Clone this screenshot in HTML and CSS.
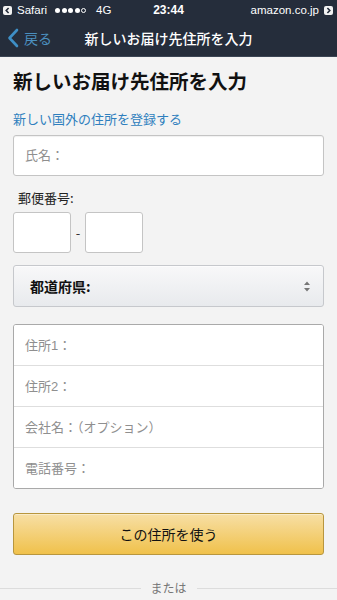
FILE: index.html
```html
<!DOCTYPE html>
<html lang="ja">

<head>
    <meta charset="UTF-8">
    <meta name="viewport" content="width=device-width, initial-scale=1.0">
    <title>新しいお届け先住所を入力</title>
    <link rel="stylesheet" href="styles.css">
</head>

<body>
    <header class="top">
        <div class="status">
            <div class="status-left">
                <span class="app-back">
                    <svg width="9" height="9" viewBox="0 0 9 9"><path d="M5.6 2 L3.2 4.5 L5.6 7" fill="none" stroke="#252d3b" stroke-width="1.6"/></svg>
                </span>
                <span>Safari</span>
                <span class="signal">
                    <i></i><i></i><i></i><i></i><i class="empty"></i>
                </span>
                <span class="net">4G</span>
            </div>
            <div class="clock">23:44</div>
            <div class="status-right">
                <span>amazon.co.jp</span>
                <span class="app-back">
                    <svg width="9" height="9" viewBox="0 0 9 9"><path d="M3.4 2 L5.8 4.5 L3.4 7" fill="none" stroke="#252d3b" stroke-width="1.6"/></svg>
                </span>
            </div>
        </div>
        <nav class="nav">
            <a class="back" href="#">
                <svg width="12" height="20" viewBox="0 0 12 20"><path d="M10 2 L2.5 10 L10 18" fill="none" stroke="#3e8fc6" stroke-width="2.6" stroke-linecap="round" stroke-linejoin="round"/></svg>
                <span>戻る</span>
            </a>
            <div class="nav-title">新しいお届け先住所を入力</div>
        </nav>
    </header>

    <main class="page">
        <h1>新しいお届け先住所を入力</h1>
        <a class="intl-link" href="#">新しい国外の住所を登録する</a>

        <input class="field" type="text" placeholder="氏名：">

        <label class="zip-label">郵便番号:</label>
        <div class="zip-row">
            <input class="zip-box" type="text">
            <span class="zip-dash">-</span>
            <input class="zip-box" type="text">
        </div>

        <div class="select">
            <span>都道府県:</span>
            <svg width="8" height="11" viewBox="0 0 8 11"><path d="M4 0.5 L7 4 L1 4 Z M4 10.5 L7 7 L1 7 Z" fill="#777"/></svg>
        </div>

        <div class="group">
            <input class="group-row" type="text" placeholder="住所1：">
            <input class="group-row" type="text" placeholder="住所2：">
            <input class="group-row" type="text" placeholder="会社名：（オプション）">
            <input class="group-row" type="text" placeholder="電話番号：">
        </div>

        <button class="submit">この住所を使う</button>

        <div class="divider"><span>または</span></div>
    </main>
</body>

</html>
```

FILE: styles.css
```css
/* General Styles */
body {
    margin: 0;
    background-color: #f3f3f3;
    font-family: 'Liberation Sans', 'Noto Sans CJK JP', sans-serif;
    color: #111;
}

/* Header */
.top {
    background-color: #252d3b;
    border-bottom: 1px solid #3b4554;
    color: #fff;
}

.status {
    height: 20px;
    display: flex;
    align-items: center;
    justify-content: space-between;
    padding: 0 4px 0 3px;
    font-size: 11.5px;
    position: relative;
}

.status-left,
.status-right {
    display: flex;
    align-items: center;
    gap: 5px;
}

.app-back {
    width: 9px;
    height: 9px;
    background: #f2f2f2;
    border-radius: 2px;
    display: flex;
}

.signal {
    display: flex;
    gap: 1.5px;
    margin-left: 3px;
}

.signal i {
    width: 5px;
    height: 5px;
    border-radius: 50%;
    background: #fff;
}

.signal i.empty {
    background: none;
    box-sizing: border-box;
    border: 1px solid #fff;
}

.net {
    margin-left: 5px;
}

.clock {
    position: absolute;
    left: 0;
    right: 0;
    text-align: center;
    font-weight: bold;
    font-size: 12px;
    pointer-events: none;
}

.nav {
    height: 36px;
    display: flex;
    align-items: center;
    position: relative;
}

.back {
    display: flex;
    align-items: center;
    gap: 5px;
    padding-left: 7px;
    color: #4b8fbf;
    text-decoration: none;
    font-size: 14px;
    font-family: 'Noto Sans CJK JP', sans-serif;
}

.nav-title {
    position: absolute;
    left: 0;
    right: 0;
    text-align: center;
    font-size: 14px;
    font-weight: 500;
    font-family: 'Noto Sans CJK JP', sans-serif;
    pointer-events: none;
}

/* Form */
.page {
    padding: 0 13px;
    font-family: 'Noto Sans CJK JP', sans-serif;
}

h1 {
    margin: 10px 0 0;
    font-size: 19.5px;
    line-height: 28px;
    font-weight: 700;
    color: #111;
}

.intl-link {
    display: block;
    margin-top: 15px;
    font-size: 13px;
    line-height: 18px;
    color: #2f7fbe;
    text-decoration: none;
}

input {
    font-family: 'Liberation Sans', 'Noto Sans CJK JP', sans-serif;
    font-size: 13px;
    color: #111;
    outline: none;
}

input::placeholder {
    color: #8f8f8f;
}

.field {
    display: block;
    box-sizing: border-box;
    width: 100%;
    height: 41px;
    margin: 7px 0 0;
    padding: 0 11px;
    background: #fff;
    border: 1px solid #c4c4c4;
    border-radius: 3px;
    box-shadow: inset 0 1px 1px rgba(0, 0, 0, 0.06);
}

.zip-label {
    display: block;
    margin-top: 13px;
    padding-left: 5px;
    font-size: 13px;
    line-height: 18px;
    color: #222;
}

.zip-row {
    display: flex;
    align-items: center;
    margin-top: 5px;
    height: 41px;
}

.zip-box {
    box-sizing: border-box;
    width: 58px;
    height: 41px;
    margin: 0;
    background: #fff;
    border: 1px solid #c4c4c4;
    border-radius: 3px;
}

.zip-dash {
    width: 14px;
    text-align: center;
    font-size: 13px;
    color: #333;
}

.select {
    box-sizing: border-box;
    height: 42px;
    margin-top: 12px;
    padding: 0 12px 0 16px;
    display: flex;
    align-items: center;
    justify-content: space-between;
    background: linear-gradient(#f8f8f9, #e8eaed);
    border: 1px solid #c6c8cc;
    border-radius: 3px;
    box-shadow: 0 1px 0 rgba(255, 255, 255, 0.6) inset;
    font-size: 14px;
    font-weight: 700;
    color: #111;
}

.group {
    margin-top: 17px;
    background: #fff;
    border: 1px solid #a9a9a9;
    border-radius: 3px;
    overflow: hidden;
}

.group-row {
    display: block;
    box-sizing: border-box;
    width: 100%;
    height: 41px;
    margin: 0;
    padding: 0 11px;
    border: 0;
    border-top: 1px solid #dedede;
    background: #fff;
}

.group-row:first-child {
    border-top: 0;
    height: 40px;
}

.submit {
    display: block;
    width: 100%;
    height: 42px;
    margin-top: 24px;
    background: linear-gradient(#f7dfa5, #f0c14b);
    border: 1px solid #b8963e;
    border-radius: 3px;
    box-shadow: 0 1px 0 rgba(255, 255, 255, 0.4) inset;
    font-family: 'Noto Sans CJK JP', sans-serif;
    font-size: 14px;
    color: #111;
}

.divider {
    margin: 25px -13px 0;
    display: flex;
    align-items: center;
    gap: 10px;
    font-size: 12px;
    line-height: 16px;
    color: #767676;
}

.divider::before,
.divider::after {
    content: '';
    flex: 1;
    height: 1px;
    background: #dcdcdc;
}
```
